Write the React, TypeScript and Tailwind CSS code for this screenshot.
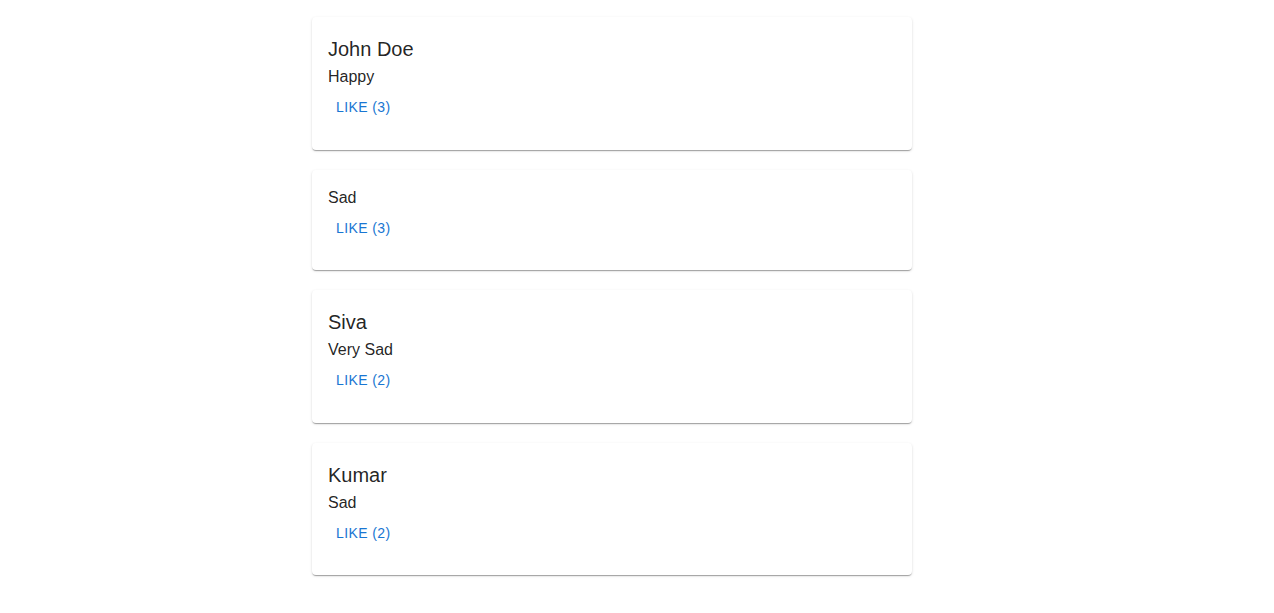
import React from "react";

const posts = [
  { name: "John Doe", status: "Happy", likes: 3 },
  { name: "", status: "Sad", likes: 3 },
  { name: "Siva", status: "Very Sad", likes: 2 },
  { name: "Kumar", status: "Sad", likes: 2 },
];

export default function App() {
  return (
    <div
      className="min-h-screen bg-white text-[rgba(0,0,0,0.87)]"
      style={{ fontFamily: '"Liberation Sans", Arial, sans-serif' }}
    >
      <div className="ml-[312px] flex w-[600px] flex-col gap-5 pt-[17px] pb-5">
        {posts.map((p, i) => (
          <div
            key={i}
            className="rounded-[4px] bg-white shadow-[0px_2px_1px_-1px_rgba(0,0,0,0.2),0px_1px_1px_0px_rgba(0,0,0,0.14),0px_1px_3px_0px_rgba(0,0,0,0.12)]"
          >
            <div className="px-4 pt-4 pb-6">
              {p.name && (
                <div className="text-[20px] leading-[32px] font-normal">{p.name}</div>
              )}
              <div className="text-[16px] leading-[24px]">{p.status}</div>
              <button className="rounded-[4px] px-2 py-[6px] text-[14px] leading-[24.5px] font-medium uppercase tracking-[0.02857em] text-[#1976d2] hover:bg-[rgba(25,118,210,0.04)]">
                Like ({p.likes})
              </button>
            </div>
          </div>
        ))}
      </div>
    </div>
  );
}
